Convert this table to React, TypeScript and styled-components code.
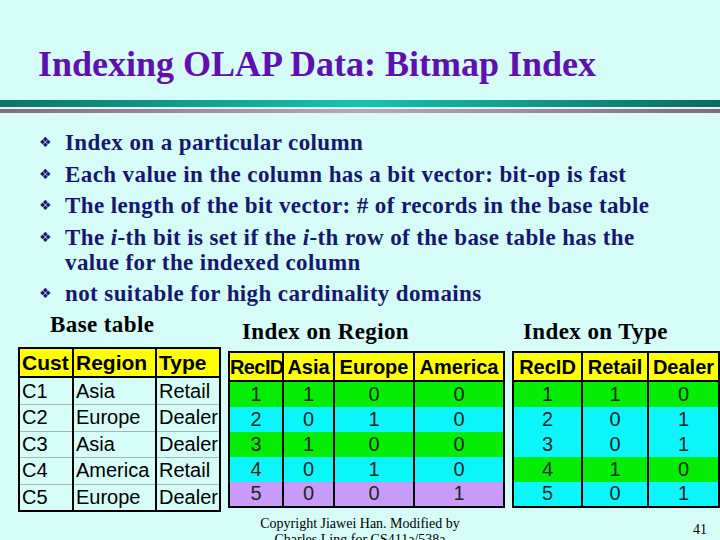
import React from "react";
import styled, { createGlobalStyle } from "styled-components";

const GlobalStyle = createGlobalStyle`
  html, body { margin: 0; padding: 0; background: #d5fcf7; }
  body { width: 720px; height: 540px; overflow: hidden; }
`;

const Slide = styled.div`
  width: 720px;
  height: 540px;
  overflow: hidden;
  background: #d5fcf7;
  display: flex;
  flex-direction: column;
  font-family: "Liberation Serif", "Times New Roman", serif;
`;

const Title = styled.h1`
  margin: 43px 0 0 38px;
  font: bold 36px/42px "Liberation Serif", "Times New Roman", serif;
  color: #6010b0;
`;

const Rules = styled.div`
  margin-top: 15px;
  display: flex;
  flex-direction: column;
  gap: 2px;
`;

const Rule = styled.div<{ $variant: "teal" | "mauve" }>`
  height: ${(p) => (p.$variant === "teal" ? 7 : 4)}px;
  background: ${(p) =>
    p.$variant === "teal"
      ? "linear-gradient(90deg, #0b7466 0%, #15c4b0 50%, #0a6a5e 100%)"
      : "linear-gradient(90deg, #8a6884 0%, #c3a2c0 50%, #876580 100%)"};
`;

const List = styled.ul`
  list-style: none;
  margin: 17px 0 0 0;
  padding: 0 60px 0 39px;
  display: flex;
  flex-direction: column;
  gap: 6.6px;
  color: #17176e;
  font: bold 23px/25px "Liberation Serif", "Times New Roman", serif;
  letter-spacing: 0.4px;
`;

const Item = styled.li`
  display: grid;
  grid-template-columns: 26px 1fr;
`;

const Bullet = styled.span`
  font: normal 14px/25px "DejaVu Sans", sans-serif;
  color: #17176e;
`;

const TablesRow = styled.div`
  display: grid;
  grid-template-columns: 202px 276px 206px;
  column-gap: 8px;
  padding-left: 18px;
  margin-top: 6px;
  align-items: start;
`;

const Column = styled.div<{ $drop: number }>`
  padding-top: ${(p) => p.$drop}px;
  display: flex;
  flex-direction: column;
`;

const Caption = styled.div<{ $indent: number; $gap: number }>`
  font: bold 23px/26px "Liberation Serif", "Times New Roman", serif;
  letter-spacing: 0.4px;
  color: #000;
  margin: 0 0 ${(p) => p.$gap}px ${(p) => p.$indent}px;
`;

const BaseTable = styled.table`
  border-collapse: collapse;
  table-layout: fixed;
  width: 201px;
  border: 2px solid #000;
  font-family: "Liberation Sans", Arial, sans-serif;
  color: #000;
`;

const BaseHead = styled.th`
  background: #ffff00;
  font-weight: bold;
  font-size: 21px;
  line-height: 24px;
  height: 27px;
  padding: 0 2px;
  text-align: left;
  border: 2px solid #000;
  white-space: nowrap;
  overflow: hidden;
`;

const BaseCell = styled.td`
  font-size: 20px;
  line-height: 23px;
  height: 25.6px;
  padding: 0 2px;
  border-top: 1px solid #a3b8b8;
  border-left: 2px solid #000;
  border-right: 2px solid #000;
  white-space: nowrap;
  overflow: hidden;
`;

const BitTable = styled.table<{ $width: number }>`
  border-collapse: collapse;
  table-layout: fixed;
  width: ${(p) => p.$width}px;
  border: 2px solid #000;
  font-family: "Liberation Sans", Arial, sans-serif;
  color: #000;
`;

const BitHead = styled.th<{ $squeeze?: boolean }>`
  background: #ffff00;
  font-weight: bold;
  font-size: 20px;
  line-height: 24px;
  height: 27px;
  padding: 0;
  text-align: center;
  letter-spacing: ${(p) => (p.$squeeze ? "-0.6px" : "0")};
  border: 2px solid #000;
  white-space: nowrap;
  overflow: hidden;
`;

const toneColor = {
  green: "#05ec05",
  cyan: "#0af6fb",
  violet: "#c89bfa",
} as const;

type Tone = keyof typeof toneColor;

const BitRow = styled.tr<{ $tone: Tone }>`
  background: ${(p) => toneColor[p.$tone]};
`;

const BitCell = styled.td`
  font-size: 20px;
  line-height: 23px;
  height: 24.8px;
  padding: 0;
  text-align: center;
  color: #1c2a1c;
  border-left: 2px solid #000;
  border-right: 2px solid #000;
`;

const Footer = styled.div`
  display: grid;
  grid-template-columns: 202px 276px 206px;
  column-gap: 8px;
  padding-left: 18px;
  align-items: start;
`;

const Copyright = styled.div`
  grid-column: 2;
  text-align: center;
  padding-right: 12px;
  margin-top: 4px;
  font: 14px/16px "Liberation Serif", "Times New Roman", serif;
  color: #000;
`;

const PageNum = styled.div`
  grid-column: 3;
  text-align: right;
  padding-right: 11px;
  margin-top: 10px;
  font: 14px/16px "Liberation Serif", "Times New Roman", serif;
  color: #000;
`;

const baseRows = [
  ["C1", "Asia", "Retail"],
  ["C2", "Europe", "Dealer"],
  ["C3", "Asia", "Dealer"],
  ["C4", "America", "Retail"],
  ["C5", "Europe", "Dealer"],
];

const regionRows: { tone: Tone; cells: string[] }[] = [
  { tone: "green", cells: ["1", "1", "0", "0"] },
  { tone: "cyan", cells: ["2", "0", "1", "0"] },
  { tone: "green", cells: ["3", "1", "0", "0"] },
  { tone: "cyan", cells: ["4", "0", "1", "0"] },
  { tone: "violet", cells: ["5", "0", "0", "1"] },
];

const typeRows: { tone: Tone; cells: string[] }[] = [
  { tone: "green", cells: ["1", "1", "0"] },
  { tone: "cyan", cells: ["2", "0", "1"] },
  { tone: "cyan", cells: ["3", "0", "1"] },
  { tone: "green", cells: ["4", "1", "0"] },
  { tone: "cyan", cells: ["5", "0", "1"] },
];

export default function App() {
  return (
    <Slide>
      <GlobalStyle />
      <Title>Indexing OLAP Data: Bitmap Index</Title>
      <Rules>
        <Rule $variant="teal" />
        <Rule $variant="mauve" />
      </Rules>
      <List>
        <Item>
          <Bullet>❖</Bullet>
          <span>Index on a particular column</span>
        </Item>
        <Item>
          <Bullet>❖</Bullet>
          <span>Each value in the column has a bit vector: bit-op is fast</span>
        </Item>
        <Item>
          <Bullet>❖</Bullet>
          <span>The length of the bit vector: # of records in the base table</span>
        </Item>
        <Item>
          <Bullet>❖</Bullet>
          <span>
            The <i>i</i>-th bit is set if the <i>i</i>-th row of the base table has the
            value for the indexed column
          </span>
        </Item>
        <Item>
          <Bullet>❖</Bullet>
          <span>not suitable for high cardinality domains</span>
        </Item>
      </List>
      <TablesRow>
        <Column $drop={0}>
          <Caption $indent={32} $gap={9}>Base table</Caption>
          <BaseTable>
            <colgroup>
              <col style={{ width: 54 }} />
              <col style={{ width: 83 }} />
              <col style={{ width: 64 }} />
            </colgroup>
            <thead>
              <tr>
                <BaseHead>Cust</BaseHead>
                <BaseHead>Region</BaseHead>
                <BaseHead>Type</BaseHead>
              </tr>
            </thead>
            <tbody>
              {baseRows.map((r) => (
                <tr key={r[0]}>
                  {r.map((c, i) => (
                    <BaseCell key={i}>{c}</BaseCell>
                  ))}
                </tr>
              ))}
            </tbody>
          </BaseTable>
        </Column>
        <Column $drop={7}>
          <Caption $indent={14} $gap={6}>Index on Region</Caption>
          <BitTable $width={275}>
            <colgroup>
              <col style={{ width: 54 }} />
              <col style={{ width: 51 }} />
              <col style={{ width: 80 }} />
              <col style={{ width: 90 }} />
            </colgroup>
            <thead>
              <tr>
                <BitHead $squeeze>RecID</BitHead>
                <BitHead>Asia</BitHead>
                <BitHead>Europe</BitHead>
                <BitHead>America</BitHead>
              </tr>
            </thead>
            <tbody>
              {regionRows.map((r) => (
                <BitRow key={r.cells[0]} $tone={r.tone}>
                  {r.cells.map((c, i) => (
                    <BitCell key={i}>{c}</BitCell>
                  ))}
                </BitRow>
              ))}
            </tbody>
          </BitTable>
        </Column>
        <Column $drop={7}>
          <Caption $indent={11} $gap={6}>Index on Type</Caption>
          <BitTable $width={206}>
            <colgroup>
              <col style={{ width: 69 }} />
              <col style={{ width: 66 }} />
              <col style={{ width: 71 }} />
            </colgroup>
            <thead>
              <tr>
                <BitHead>RecID</BitHead>
                <BitHead>Retail</BitHead>
                <BitHead>Dealer</BitHead>
              </tr>
            </thead>
            <tbody>
              {typeRows.map((r) => (
                <BitRow key={r.cells[0]} $tone={r.tone}>
                  {r.cells.map((c, i) => (
                    <BitCell key={i}>{c}</BitCell>
                  ))}
                </BitRow>
              ))}
            </tbody>
          </BitTable>
        </Column>
      </TablesRow>
      <Footer>
        <Copyright>
          Copyright Jiawei Han. Modified by
          <br />
          Charles Ling for CS411a/538a
        </Copyright>
        <PageNum>41</PageNum>
      </Footer>
    </Slide>
  );
}
